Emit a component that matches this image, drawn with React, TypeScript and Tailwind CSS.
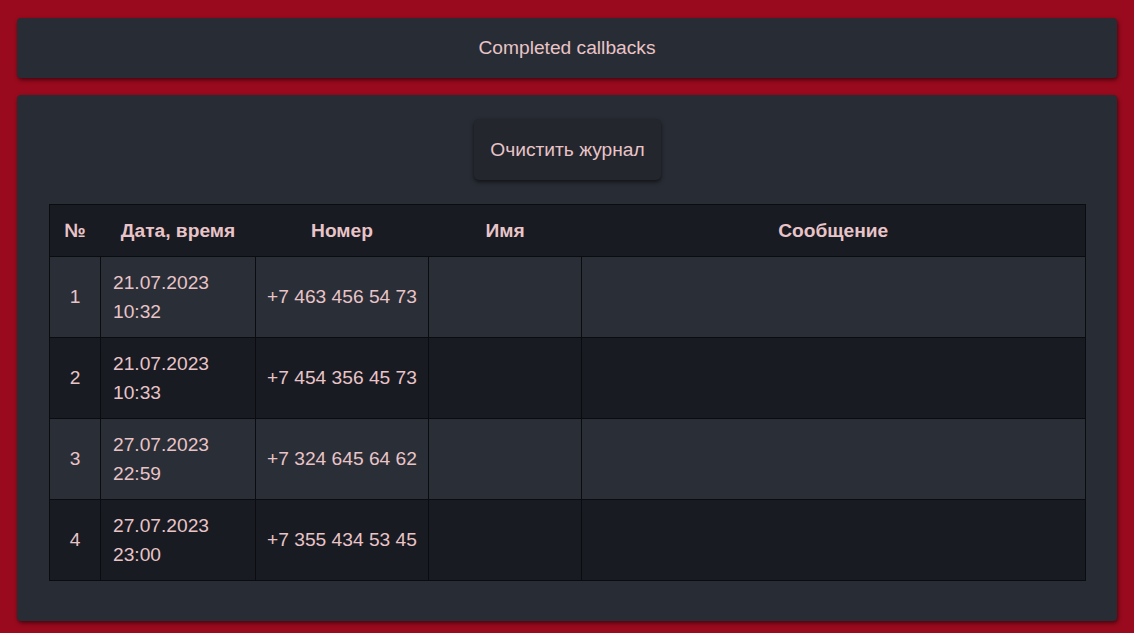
import React from "react";

const rows = [
  { n: 1, d: "21.07.2023", t: "10:32", p: "+7 463 456 54 73" },
  { n: 2, d: "21.07.2023", t: "10:33", p: "+7 454 356 45 73" },
  { n: 3, d: "27.07.2023", t: "22:59", p: "+7 324 645 64 62" },
  { n: 4, d: "27.07.2023", t: "23:00", p: "+7 355 434 53 45" },
];

export default function App() {
  return (
    <div
      className="min-h-screen bg-[#9a0a1e] px-[17px] pt-[18px] pb-[13px] flex flex-col gap-[17px] text-[19.2px] leading-[1.5] text-[#e8c4c8]"
      style={{ fontFamily: '"Liberation Sans", Arial, sans-serif' }}
    >
      <div className="h-[60px] rounded-[4px] bg-[#282c34] shadow-[1px_2px_4px_rgba(0,0,0,0.55)] flex items-center justify-center pt-[1px]">
        Completed callbacks
      </div>
      <div className="rounded-[4px] bg-[#282c34] shadow-[1px_2px_4px_rgba(0,0,0,0.55)] pt-[24px] pb-[40px] pl-[32px] pr-[31px] flex flex-col items-center gap-[24px]">
        <button className="h-[61px] px-[16px] pt-[1px] rounded-[5px] bg-[#23262d] shadow-[0_2px_4px_rgba(0,0,0,0.6)] text-[#e8c4c8]">
          Очистить журнал
        </button>
        <table className="w-full border-collapse border border-[#0a0c10]">
          <thead>
            <tr className="bg-[#181b22] h-[52px]">
              <th className="w-[51px] font-bold text-center pt-[1px]">№</th>
              <th className="w-[155px] font-bold text-center pt-[1px]">Дата, время</th>
              <th className="w-[173px] font-bold text-center pt-[1px]">Номер</th>
              <th className="w-[153px] font-bold text-center pt-[1px]">Имя</th>
              <th className="font-bold text-center pt-[1px]">Сообщение</th>
            </tr>
          </thead>
          <tbody>
            {rows.map((r, i) => (
              <tr key={r.n} className={i % 2 === 0 ? "bg-[#2a2e36] h-[81px]" : "bg-[#181b22] h-[81px]"}>
                <td className="border border-[#0a0c10] text-center pt-[1px]">{r.n}</td>
                <td className="border border-[#0a0c10] px-[12px] pt-[1px]">
                  {r.d}
                  <br />
                  {r.t}
                </td>
                <td className="border border-[#0a0c10] px-[11px] pt-[1px]">{r.p}</td>
                <td className="border border-[#0a0c10]"></td>
                <td className="border border-[#0a0c10]"></td>
              </tr>
            ))}
          </tbody>
        </table>
      </div>
    </div>
  );
}
